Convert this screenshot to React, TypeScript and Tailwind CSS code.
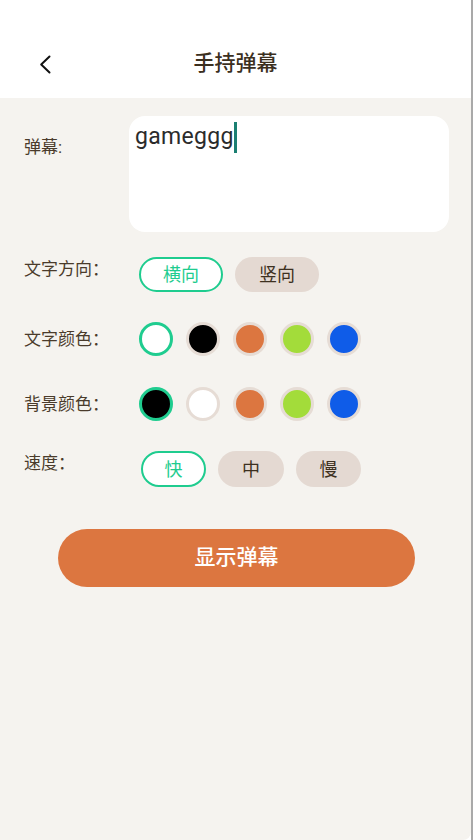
import { useState } from "react"

const font = { fontFamily: 'Roboto, "Noto Sans CJK SC", sans-serif' }

const textColors = ["#ffffff", "#000000", "#dc7640", "#a3dc3a", "#0f5ce8"]
const bgColors = ["#000000", "#ffffff", "#dc7640", "#a3dc3a", "#0f5ce8"]

function Pill({ label, active, w }: { label: string; active: boolean; w: string }) {
  return (
    <div
      className={
        "flex h-[35px] items-center justify-center rounded-full text-[18px] " +
        w +
        (active
          ? " border-[2.5px] border-[#1fcc8f] bg-white text-[#1fcc8f]"
          : " bg-[#e4d9d2] text-[#3d3020]")
      }
    >
      {label}
    </div>
  )
}

function Swatches({ colors, selected }: { colors: string[]; selected: number }) {
  return (
    <div className="flex gap-[13px]">
      {colors.map((c, i) => (
        <div
          key={c}
          className={
            "h-[34px] w-[34px] rounded-full " +
            (i === selected ? "border-[3px] border-[#1fcc8f]" : "border-[3px] border-[#e6dcd5]")
          }
          style={{ backgroundColor: c }}
        />
      ))}
    </div>
  )
}

export default function App() {
  const [text] = useState("gameggg")

  return (
    <div className="flex h-[840px] w-[473px] bg-white" style={font}>
      <div className="flex w-[471px] flex-col overflow-hidden rounded-br-[8px] bg-[#f5f3ef]">
        <div className="h-[98px] bg-white pt-[44px]">
          <div className="flex h-[40px] items-center pl-[39px] pr-[51px]">
            <svg width="12" height="19" viewBox="0 0 12 19" fill="none">
              <path d="M10.5 1.5L2.2 9.5L10.5 17.5" stroke="#111" strokeWidth="2" strokeLinecap="round" strokeLinejoin="round" />
            </svg>
            <div className="flex-1 text-center text-[21px] font-medium text-[#3b2f1e]">手持弹幕</div>
          </div>
        </div>

        <div className="px-6 pt-[18px] text-[17px] text-[#4a3b2b]">
          <div className="flex items-start">
            <div className="w-[105px] shrink-0 pt-[19px] leading-[24px]">弹幕:</div>
            <div className="h-[116px] w-[320px] shrink-0 rounded-[16px] bg-white px-[6px] pt-[6px] text-[23px] leading-[30px] tracking-[0.3px] text-[#2b2b2b]">
              {text}
              <span className="inline-block h-[31px] w-[3px] bg-[#1b7f72] align-top" />
            </div>
          </div>

          <div className="mt-[25px] flex items-start">
            <div className="w-[115px] shrink-0 leading-[24px]">文字方向：</div>
            <div className="flex gap-[12px]">
              <Pill label="横向" active w="w-[84px]" />
              <Pill label="竖向" active={false} w="w-[84px]" />
            </div>
          </div>

          <div className="mt-[30px] flex items-center">
            <div className="w-[115px] shrink-0 leading-[34px]">文字颜色：</div>
            <Swatches colors={textColors} selected={0} />
          </div>

          <div className="mt-[31px] flex items-center">
            <div className="w-[115px] shrink-0 leading-[34px]">背景颜色：</div>
            <Swatches colors={bgColors} selected={0} />
          </div>

          <div className="mt-[30px] flex items-start">
            <div className="w-[117px] shrink-0 leading-[24px]">速度：</div>
            <div className="flex gap-[12px] [&>div]:h-[36px]">
              <Pill label="快" active w="w-[65px]" />
              <Pill label="中" active={false} w="w-[66px]" />
              <Pill label="慢" active={false} w="w-[65px]" />
            </div>
          </div>

          <button className="ml-[34px] mt-[42px] flex h-[58px] w-[357px] items-center justify-center rounded-full bg-[#dc7640] text-[21px] font-medium text-white">
            显示弹幕
          </button>
        </div>
      </div>
      <div className="w-[2px] bg-[#a9a9a9]" />
    </div>
  )
}
